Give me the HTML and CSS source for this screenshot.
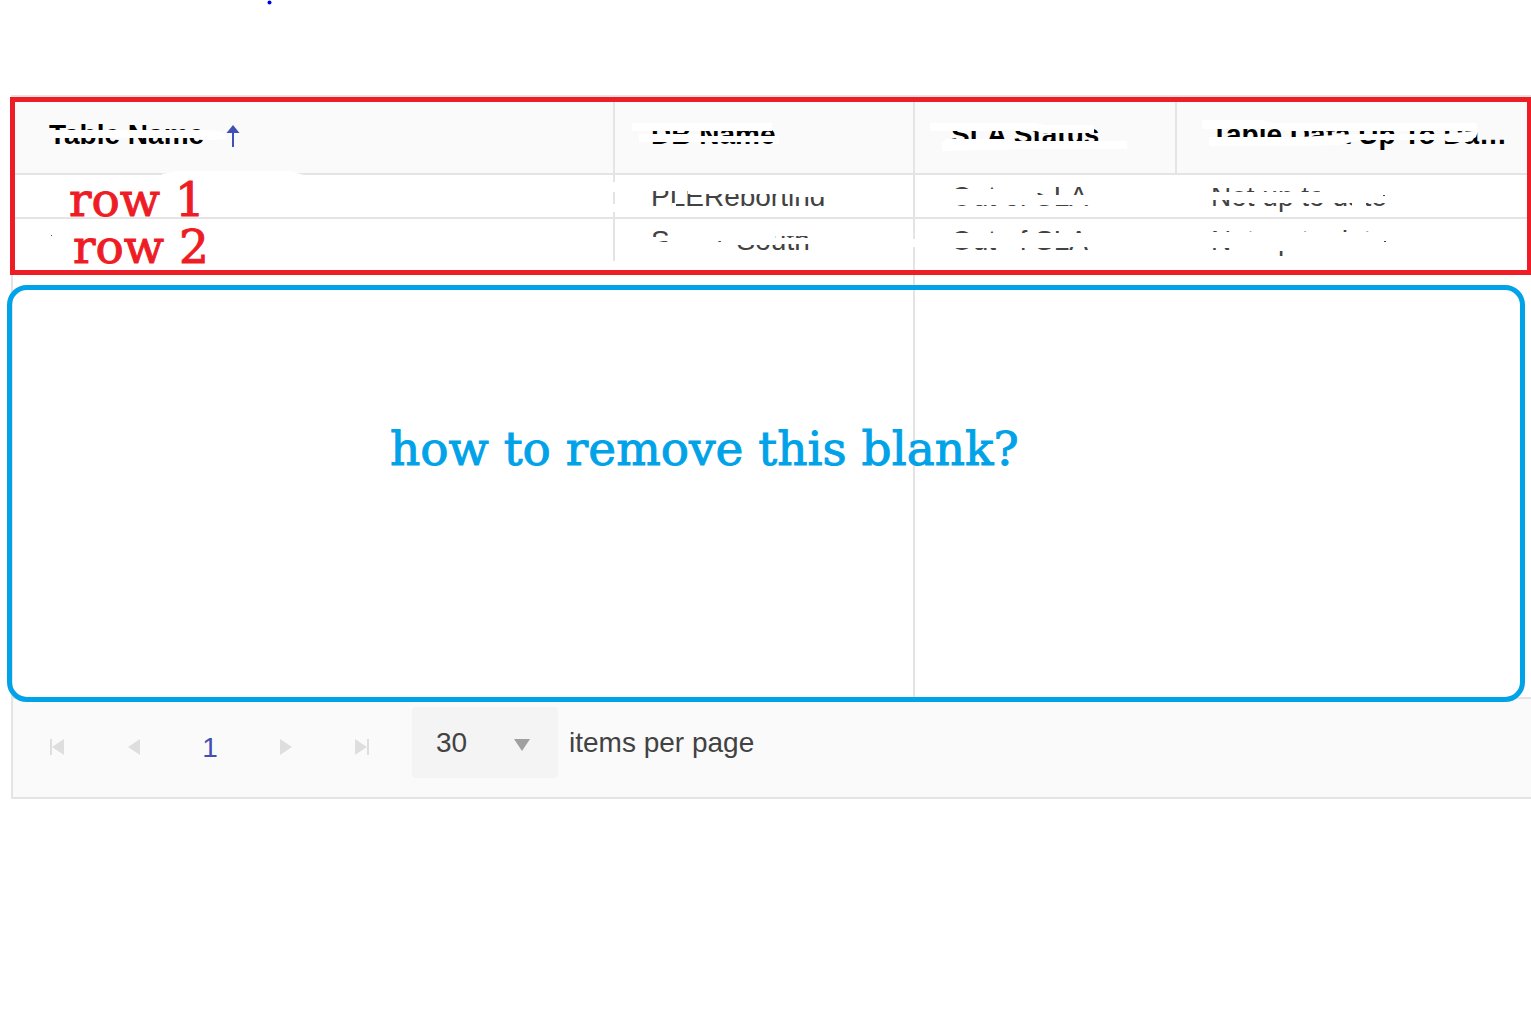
FILE: index.html
```
<!DOCTYPE html>
<html lang="en">
<head>
    <meta charset="UTF-8">
    <meta name="viewport" content="width=device-width, initial-scale=1.0">
    <title>Table Status</title>
    <link rel="stylesheet" href="styles.css">
</head>
<body>
    <div class="grid">
        <table class="grid-table">
            <colgroup>
                <col>
                <col class="col-db">
                <col class="col-sla">
                <col class="col-date">
            </colgroup>
            <thead>
                <tr>
                    <th>Table Name
                        <svg class="sort-icon" width="14" height="22" viewBox="0 0 14 22" aria-hidden="true"><path d="M7 0l6.500 8h-5.500v14h-2v-14H.5z" fill="#3f51b5"/></svg>
                    </th>
                    <th>DB Name</th>
                    <th>SLA Status</th>
                    <th>Table Data Up To Da…</th>
                </tr>
            </thead>
            <tbody>
                <tr>
                    <td></td>
                    <td>PLEReporting</td>
                    <td>Out of SLA</td>
                    <td>Not up to date</td>
                </tr>
                <tr class="last">
                    <td></td>
                    <td>SupplySouth</td>
                    <td>Out of SLA</td>
                    <td>Not up to date</td>
                </tr>
                <!-- Empty space under the rows -->
                <tr class="filler">
                    <td></td>
                    <td></td>
                    <td></td>
                    <td></td>
                </tr>
            </tbody>
        </table>
        <div class="pager">
            <button class="page-button" aria-label="First page">
                <svg width="16" height="16" viewBox="0 0 16 16"><path d="M0 0h2v16H0zM14 0v16L2 8z"/></svg>
            </button>
            <button class="page-button" aria-label="Previous page">
                <svg width="16" height="16" viewBox="0 0 16 16"><path d="M14 0v16L2 8z"/></svg>
            </button>
            <button class="page-button page-current">1</button>
            <button class="page-button" aria-label="Next page">
                <svg width="16" height="16" viewBox="0 0 16 16"><path d="M2 0v16l12-8z"/></svg>
            </button>
            <button class="page-button" aria-label="Last page">
                <svg width="16" height="16" viewBox="0 0 16 16"><path d="M13 0h2v16h-2zM1 0v16l12-8z"/></svg>
            </button>
            <div class="page-size">
                <select id="page-size">
                    <option>30</option>
                </select>
                <svg class="select-arrow" width="16" height="12" viewBox="0 0 16 12" aria-hidden="true"><path d="M0 0h16L8 12z"/></svg>
            </div>
            <label for="page-size">items per page</label>
        </div>
    </div>

    <!-- Brush strokes over the table text -->
    <svg class="strokes" width="1531" height="300" viewBox="0 0 1531 300" aria-hidden="true">
        <circle cx="269.500" cy="2.500" r="2" fill="#0000e0"/>
        <g fill="#fff">
            <!-- header -->
            <path d="M50 130h155l15 1 6 4v4l-16 1-10-2H50z"/>
            <path d="M162 175v-1l16-3h112l14 4h18v1H162z"/>
            <path d="M632 123h140v8H632zM639 134h61v2h79v8h-6v-2H639z"/>
            <path d="M930 123h106l8 2h50v7l-4 1h-48l-6-2H930zM942 143l4-4h64v2h117v8h-104l-24 1-57 1z"/>
            <path d="M1202 120h60l10 3h205v8h-187l-10-2h-78zM1209 137h90l56-3h90l28-3h5l-2 6-8 5h-20l-4-2h-84l-20 5-40 1h-91z"/>
            <!-- row 1 -->
            <path d="M612 182h4v10h-4zM612 204h4v8h-4z"/>
            <path d="M648 183h180v14h-33v-3H688v-3h-40zM648 206h180v9H648zM672 203h4v4h-4z"/>
            <path d="M948 189h46v-7h59v11h-16v2h55v10H948z"/>
            <path d="M1205 182h185v6h-185zM1205 192h115v-10h70v21h-160v-3h-25zM1352 200h14v8h-14z"/>
            <!-- row 2 -->
            <path d="M648 237h22v4h-22zM648 242h87v14h-87zM670 228h47v16h-47zM721 228h54v17h-40v-2h-14zM717 228h4v13h-4zM775 228h37v8h-37zM769 238h43v6h-43zM735 250h80v8h-80z"/>
            <path d="M912 239h4v8h-4z"/>
            <path d="M948 233h52v-6h20v6h72v14h-30v1h-42v8h-20v-8h-52z"/>
            <path d="M1205 232h185v19h-160v-3h-25z"/>
        </g>
        <rect x="51" y="235" width="1" height="1" fill="#444"/>
        <rect x="1384" y="241" width="2" height="1" fill="#444"/>
        <rect x="1383" y="195" width="2" height="1" fill="#444"/>
    </svg>

    <div class="note note-red">
        <div class="row-one">row 1</div>
        <div class="row-two">row 2</div>
    </div>
    <div class="note note-blue">how to remove this blank?</div>
</body>
</html>
```
FILE: styles.css
```
body {
    margin: 0;
    padding: 95px 0 0 11px;
    position: relative;
    overflow-x: hidden;
    background-color: #fff;
    color: #424242;
    font-family: "Liberation Sans", Arial, sans-serif;
    font-size: 28px;
    line-height: 32px;
}

.grid {
    border: 2px solid #e4e4e4;
    border-right: none;
}

.grid-table {
    width: 100%;
    table-layout: fixed;
    border-collapse: separate;
    border-spacing: 0;
}

.col-db {
    width: 300px;
}

.col-sla {
    width: 262px;
}

.col-date {
    width: 354px;
}

.grid-table th,
.grid-table td {
    box-sizing: border-box;
    padding: 0 0 0 36px;
    border-right: 2px solid #e4e4e4;
    border-bottom: 2px solid #e4e4e4;
    text-align: left;
    white-space: nowrap;
}

.grid-table th {
    height: 78px;
    background-color: #fafafa;
    color: #000;
}

.grid-table td {
    height: 44px;
    padding-top: 2px;
}

.grid-table th:last-child,
.grid-table td:last-child {
    padding-left: 34px;
}

.grid-table th:last-child,
.grid-table td:last-child,
.grid-table td:nth-child(3),
.filler td:first-child {
    border-right: none;
}

.grid-table .last td {
    height: 42px;
    border-bottom: none;
}

.grid-table .filler td {
    height: 438px;
}

.sort-icon {
    margin-left: 14px;
    vertical-align: -3px;
}

.pager {
    display: flex;
    align-items: center;
    height: 98px;
    padding-left: 7px;
    background-color: #fafafa;
}

.page-button {
    width: 76px;
    height: 72px;
    padding: 0;
    border: none;
    background: none;
    color: #3f51b5;
    font: inherit;
}

.page-button svg {
    display: block;
    margin: 0 auto 2px;
    fill: #dedede;
}

.page-size {
    position: relative;
    margin: 0 11px 11px 12px;
}

.page-size select {
    display: block;
    width: 146px;
    height: 71px;
    padding: 0 24px;
    border: none;
    border-radius: 4px;
    background-color: #f4f4f4;
    color: #424242;
    font: inherit;
    appearance: none;
}

.select-arrow {
    position: absolute;
    right: 28px;
    top: 32px;
    fill: #a0a0a0;
    pointer-events: none;
}

.pager label {
    margin-bottom: 10px;
}

.strokes {
    position: absolute;
    top: 0;
    left: 0;
}

/* Hand-drawn notes lying over the grid */
.note {
    position: absolute;
    box-sizing: border-box;
    font-family: Rockwell, "DejaVu Serif", serif;
    font-size: 47px;
    line-height: 47px;
    -webkit-text-stroke: 1px currentColor;
}

.note-red {
    top: 97px;
    left: 10px;
    right: -1px;
    height: 178px;
    padding: 74px 0 0 54px;
    border: 5px solid #ee1c24;
    color: #ee1c24;
}

.row-two {
    padding-left: 4px;
}

.note-blue {
    top: 285px;
    left: 7px;
    right: 6px;
    height: 417px;
    padding: 135px 0 0 378px;
    border: 5px solid #00a2e8;
    border-radius: 20px;
    color: #00a2e8;
    white-space: nowrap;
}
```
